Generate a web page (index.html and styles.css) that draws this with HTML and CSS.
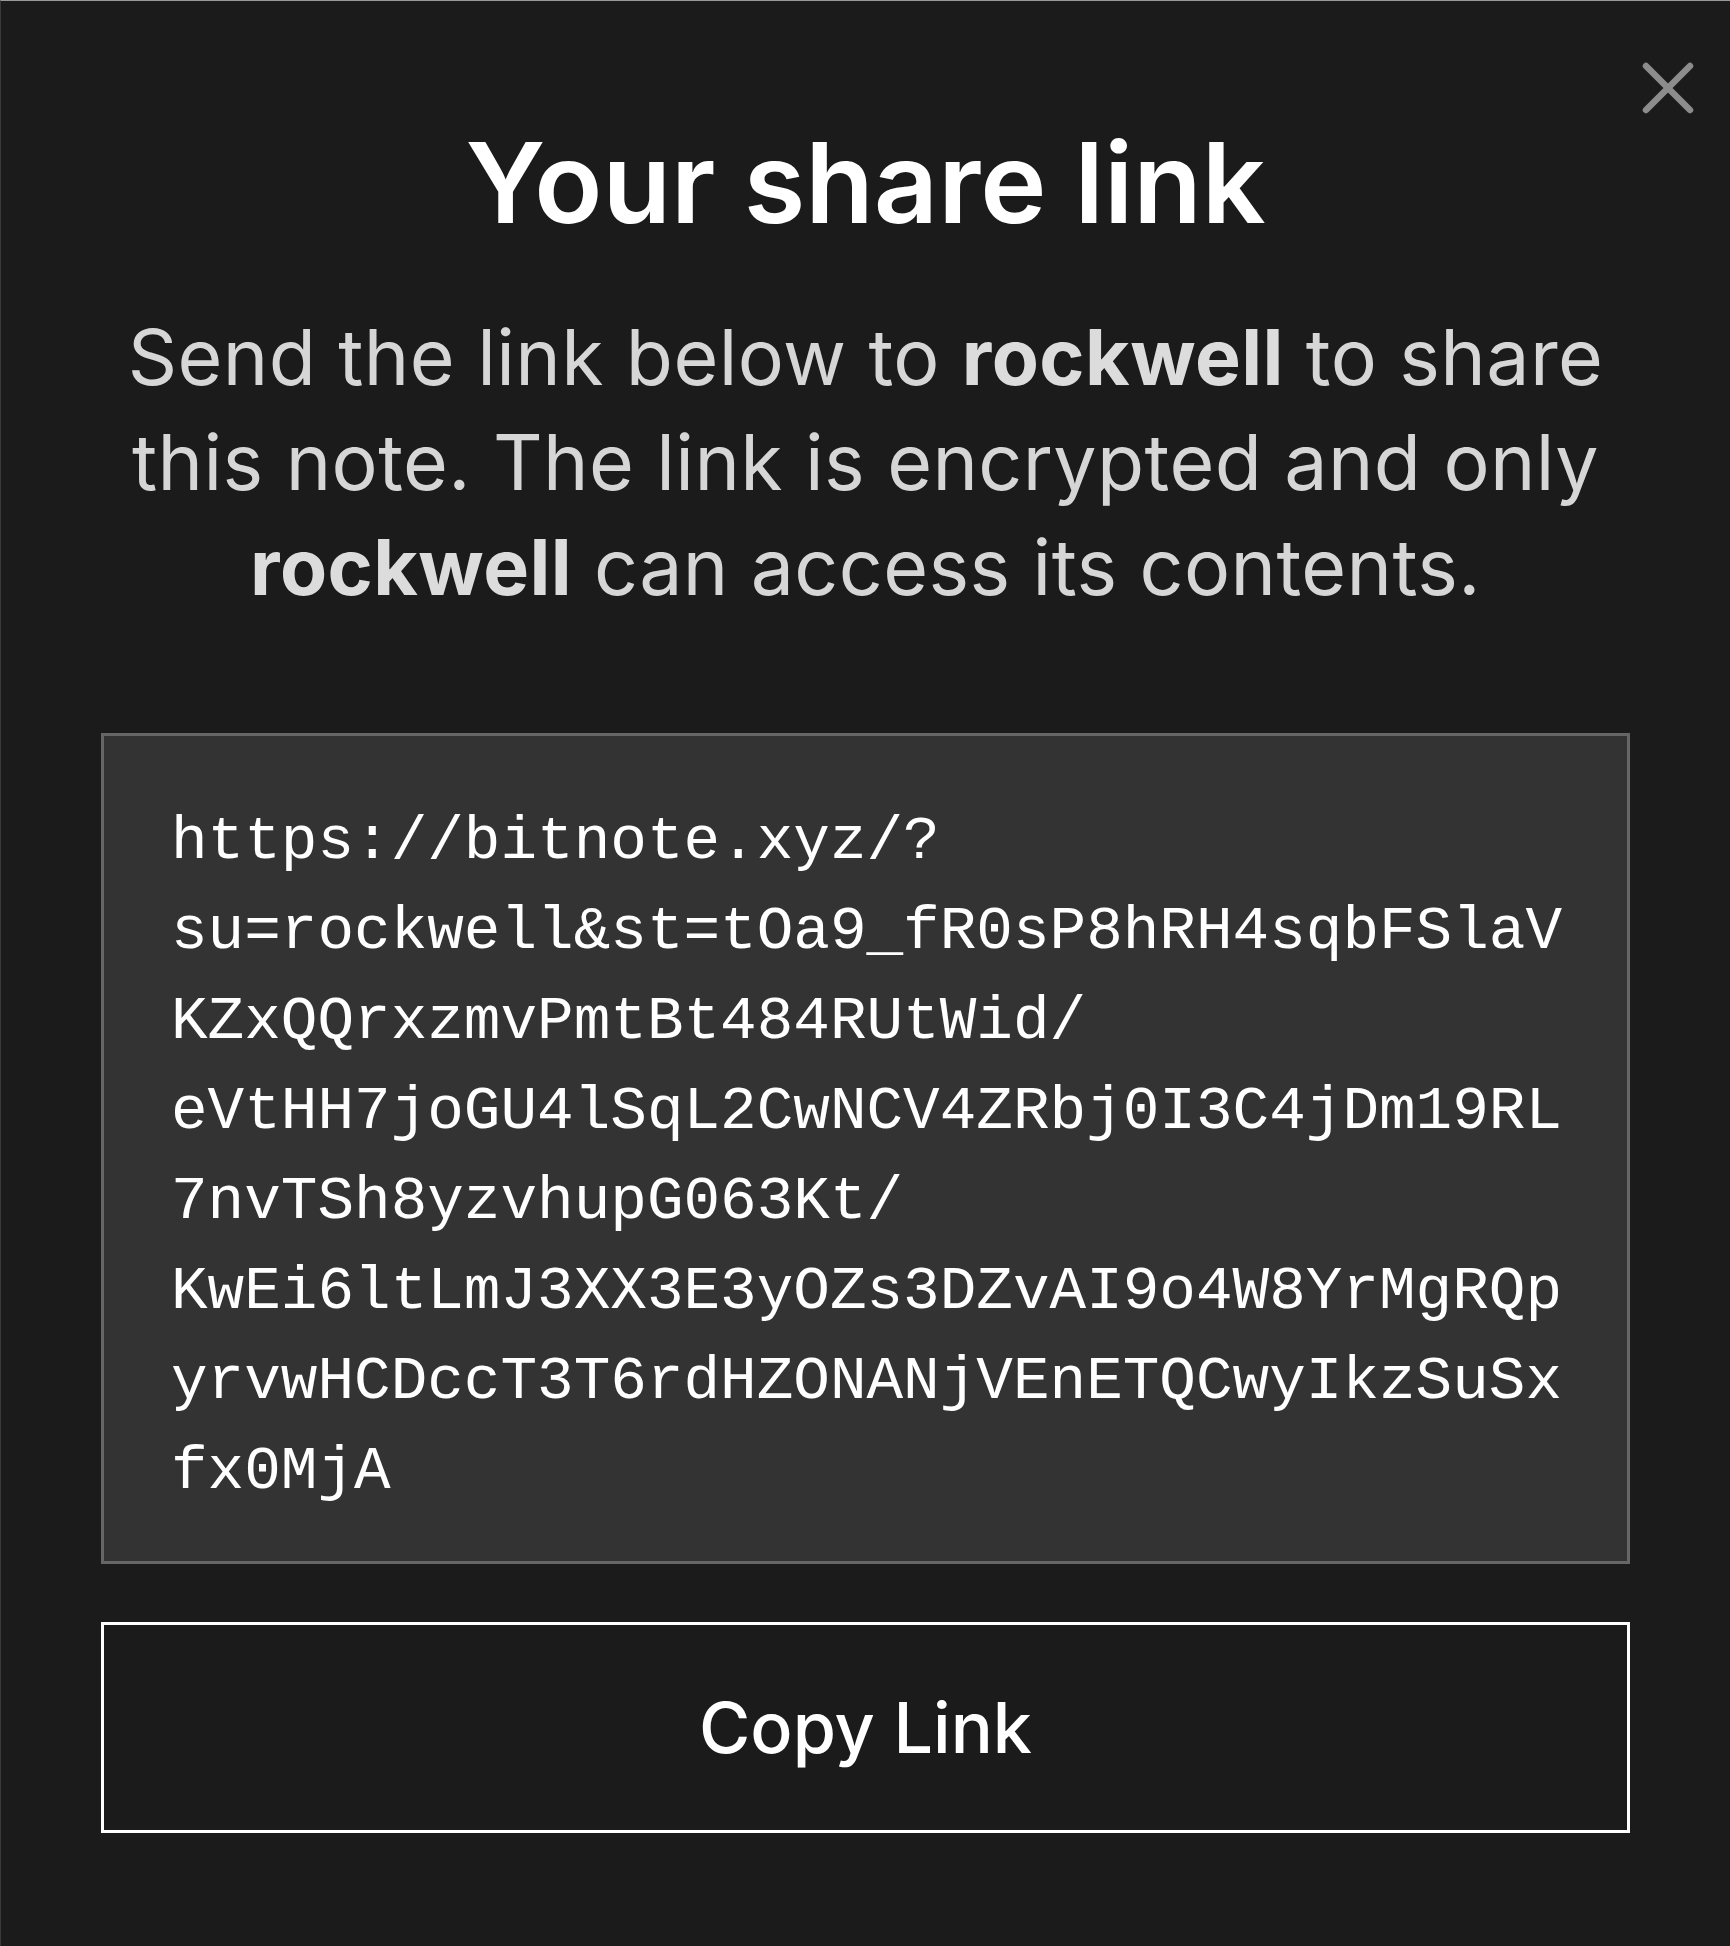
FILE: index.html
```html
<!DOCTYPE html>
<html>
<head>
    <title>Your share link</title>
    <link rel="stylesheet" href="styles.css">
</head>
<body>
    <div class="modal">
        <button class="close-btn" aria-label="Close">
            <svg width="60" height="60" viewBox="0 0 60 60">
                <path d="M8 8 L52 52 M52 8 L8 52" stroke="#8c8c8c" stroke-width="6.5" stroke-linecap="round" fill="none"/>
            </svg>
        </button>
        <h1 class="title">Your share link</h1>
        <p class="intro">Send the link below to <b>rockwell</b> to share this note. The link is encrypted and only <b>rockwell</b> can access its contents.</p>
        <div class="link-box">https://bitnote.xyz/?<wbr>su=rockwell&amp;st=tOa9_fR0sP8hRH4sqbFSlaVKZxQQrxzmvPmtBt484RUtWid/<wbr>eVtHH7joGU4lSqL2CwNCV4ZRbj0I3C4jDm19RL7nvTSh8yzvhupG063Kt/<wbr>KwEi6ltLmJ3XX3E3yOZs3DZvAI9o4W8YrMgRQpyrvwHCDccT3T6rdHZONANjVEnETQCwyIkzSuSxfx0MjA</div>
        <button class="copy-btn">Copy Link</button>
    </div>
</body>
</html>
```

FILE: styles.css
```css
html, body {
    margin: 0;
    padding: 0;
    background-color: #1b1b1b;
}
body {
    font-family: Inter, "Noto Sans", sans-serif;
}
.modal {
    position: relative;
    min-height: 1946px;
    box-sizing: border-box;
    padding: 114px 100px 0 100px;
    border-top: 1px solid #9a9a9a;
    border-left: 1px solid #3a3a3a;
    display: flex;
    flex-direction: column;
}
.close-btn {
    position: absolute;
    top: 57px;
    left: 1637px;
    width: 60px;
    height: 60px;
    padding: 0;
    border: none;
    background: none;
}
.close-btn svg {
    display: block;
}
.title {
    margin: 0;
    font-size: 112px;
    line-height: 134px;
    font-weight: 600;
    letter-spacing: 0;
    color: #ffffff;
    text-align: center;
}
.intro {
    margin: 56px 0 0 0;
    font-size: 77px;
    line-height: 105px;
    letter-spacing: 0.4px;
    color: #d6d6d6;
    text-align: center;
}
.intro b {
    font-weight: 700;
    color: #dcdcdc;
}
.link-box {
    margin-top: 113px;
    padding: 61px 48px 44px 67px;
    border: 3px solid #666666;
    background-color: #333333;
    color: #ffffff;
    font-family: "Liberation Mono", monospace;
    font-size: 61px;
    line-height: 90px;
    overflow-wrap: break-word;
}
.copy-btn {
    margin-top: 58px;
    height: 211px;
    box-sizing: border-box;
    border: 3px solid #ffffff;
    background: transparent;
    color: #ffffff;
    font-family: Inter, "Noto Sans", sans-serif;
    font-size: 70px;
    font-weight: 500;
    line-height: 1;
    cursor: pointer;
}
```
